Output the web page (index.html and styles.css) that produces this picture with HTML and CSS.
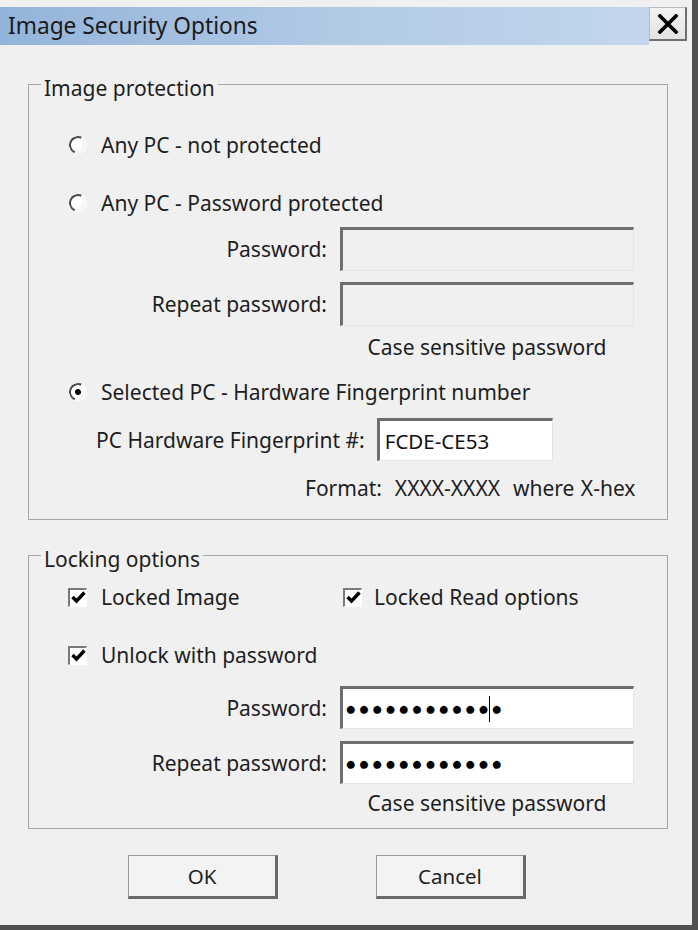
FILE: index.html
```html
<!DOCTYPE html>
<html lang="en">
<head>
<meta charset="utf-8">
<title>Image Security Options</title>
<link rel="stylesheet" href="styles.css">
</head>
<body>
<div class="window">
  <div class="titlebar">
    <div class="title">Image Security Options</div>
    <div class="close">
      <svg width="22" height="20" viewBox="0 0 22 20"><path d="M3 2 L19 18 M19 2 L3 18" stroke="#000" stroke-width="3.6" stroke-linecap="square"/></svg>
    </div>
  </div>

  <fieldset class="group g1">
    <legend>Image protection</legend>
    <div class="opt r1"><span class="radio"></span><span>Any PC - not protected</span></div>
    <div class="opt r2"><span class="radio"></span><span>Any PC - Password protected</span></div>
    <div class="field f1"><span class="lbl">Password:</span><div class="input disabled"></div></div>
    <div class="field f2"><span class="lbl">Repeat password:</span><div class="input disabled"></div></div>
    <div class="field note n1"><span></span><span class="notetext">Case sensitive password</span></div>
    <div class="opt r3"><span class="radio checked"></span><span>Selected PC - Hardware Fingerprint number</span></div>
    <div class="fp-row"><span class="fp-lbl">PC Hardware Fingerprint #:</span><div class="input fp">FCDE-CE53</div></div>
    <div class="format">Format:&nbsp; <span class="xx">XXXX-XXXX</span>&nbsp; where X-hex</div>
  </fieldset>

  <fieldset class="group g2">
    <legend>Locking options</legend>
    <div class="chk-row c1">
      <div class="opt-inline"><span class="check"><svg width="15" height="15" viewBox="0 0 15 15"><path d="M1.5 7 L5.5 11 L13.5 2.5" fill="none" stroke="#000" stroke-width="3.4"/></svg></span><span>Locked Image</span></div>
      <div class="opt-inline second"><span class="check"><svg width="15" height="15" viewBox="0 0 15 15"><path d="M1.5 7 L5.5 11 L13.5 2.5" fill="none" stroke="#000" stroke-width="3.4"/></svg></span><span>Locked Read options</span></div>
    </div>
    <div class="chk-row c2">
      <div class="opt-inline"><span class="check"><svg width="15" height="15" viewBox="0 0 15 15"><path d="M1.5 7 L5.5 11 L13.5 2.5" fill="none" stroke="#000" stroke-width="3.4"/></svg></span><span>Unlock with password</span></div>
    </div>
    <div class="field f3"><span class="lbl">Password:</span><div class="input pw"><span>●●●●●●●●●●●</span><span class="caret"></span><span>●</span></div></div>
    <div class="field f4"><span class="lbl">Repeat password:</span><div class="input pw"><span>●●●●●●●●●●●●</span></div></div>
    <div class="field note n2"><span></span><span class="notetext">Case sensitive password</span></div>
  </fieldset>

  <div class="buttons">
    <div class="btn">OK</div>
    <div class="btn">Cancel</div>
  </div>
</div>
</body>
</html>
```

FILE: styles.css
```css
html, body {
  margin: 0;
  padding: 0;
  background: #f3f3f3;
}
.window {
  width: 698px;
  height: 930px;
  box-sizing: border-box;
  background: #f0f0f0;
  border-right: 6px solid #505050;
  border-bottom: 5px solid #505050;
  padding-top: 7px;
  font-family: "Noto Sans", "Open Sans", sans-serif;
  font-size: 21px;
  color: #1e1e1e;
  display: flex;
  flex-direction: column;
}
.titlebar {
  display: flex;
  align-items: stretch;
  height: 38px;
}
.title {
  flex: 1;
  background: linear-gradient(to right, #93b4da, #b3cbe6 55%, #c3d6ec);
  padding-left: 8px;
  font-size: 22.7px;
  line-height: 38px;
  color: #1a1a1a;
}
.close {
  width: 38px;
  height: 34px;
  box-sizing: border-box;
  margin: 0 5px 0 0;
  background: linear-gradient(#f4f4f4, #e2e2e2);
  border: 1px solid #b8b8b8;
  border-right: 2px solid #6f6f6f;
  border-bottom: 2px solid #6f6f6f;
  display: flex;
  align-items: center;
  justify-content: center;
}
.group {
  margin: 0 0 0 28px;
  padding: 0;
  width: 640px;
  box-sizing: border-box;
  border: 1px solid #a6a6a6;
  min-inline-size: 0;
}
.group legend {
  margin-left: 12px;
  padding: 8px 3px 0 3px;
  line-height: 26px;
}
.g1 { margin-top: 22px; padding-bottom: 19px; }
.g2 { margin-top: 18px; padding-bottom: 13px; }

.opt {
  display: flex;
  align-items: center;
  height: 30px;
  padding-left: 40px;
  gap: 14px;
}
.r1 { margin-top: 29px; }
.r2 { margin-top: 28px; }
.r3 { margin-top: 18px; }

.radio {
  flex: none;
  width: 18px;
  height: 18px;
  box-sizing: border-box;
  border-radius: 50%;
  border: 2.5px solid;
  border-color: #4a4a4a #fbfbfb #fbfbfb #4a4a4a;
  background: radial-gradient(circle at 40% 40%, #ffffff 45%, #e2e2e2);
  display: flex;
  align-items: center;
  justify-content: center;
  transform: rotate(-20deg);
}
.radio.checked::after {
  content: "";
  width: 6px;
  height: 6px;
  border-radius: 50%;
  background: #000;
}

.field {
  display: grid;
  grid-template-columns: 298px 294px;
  column-gap: 13px;
  align-items: center;
}
.lbl { text-align: right; }
.input {
  height: 44px;
  box-sizing: border-box;
  border-top: 3px solid #6e6e6e;
  border-left: 3px solid #6e6e6e;
  border-right: 1px solid #e4e4e4;
  border-bottom: 1px solid #e4e4e4;
  background: #ffffff;
}
.input.disabled { background: #f0f0f0; }
.f1 { margin-top: 9px; }
.f2 { margin-top: 11px; }
.note { height: 24px; }
.notetext { text-align: center; line-height: 24px; white-space: nowrap; }
.n1 { margin-top: 9px; }

.fp-row {
  display: flex;
  align-items: center;
  margin-top: 11px;
  padding-left: 67px;
  gap: 12px;
}
.input.fp {
  flex: none;
  width: 176px;
  height: 43px;
  padding-left: 5px;
  display: flex;
  align-items: center;
  font-size: 20.5px;
  color: #111;
}
.format {
  margin-top: 15px;
  padding-left: 276px;
  line-height: 24px;
  white-space: nowrap;
  word-spacing: 1px;
}

.chk-row {
  display: flex;
  align-items: center;
  height: 30px;
  padding-left: 39px;
}
.c1 { margin-top: 10px; }
.c2 { margin-top: 28px; }
.opt-inline {
  display: flex;
  align-items: center;
  gap: 14px;
  width: 275px;
}
.opt-inline.second { gap: 12px; }
.check {
  flex: none;
  width: 19px;
  height: 19px;
  box-sizing: border-box;
  border-top: 2px solid #7a7a7a;
  border-left: 2px solid #7a7a7a;
  border-right: 1px solid #ffffff;
  border-bottom: 1px solid #ffffff;
  background: #ffffff;
  display: flex;
  align-items: center;
  justify-content: center;
}
.f3 { margin-top: 16px; }
.f4 { margin-top: 12px; }
.f3 .input, .f4 .input { height: 43px; }
.input.pw {
  display: flex;
  align-items: center;
  padding-left: 2px;
  font-family: "Liberation Sans", sans-serif;
  font-size: 18.5px;
  letter-spacing: 2.1px;
  color: #000;
  white-space: nowrap;
}
.caret {
  flex: none;
  width: 1px;
  height: 26px;
  background: #000;
  margin-left: -2px;
  margin-right: 1px;
}
.n2 { margin-top: 7px; }

.buttons {
  display: flex;
  gap: 98px;
  padding-left: 128px;
  margin-top: 26px;
}
.btn {
  width: 150px;
  height: 44px;
  box-sizing: border-box;
  background: #f3f3f3;
  border: 1px solid #9a9a9a;
  border-right: 3px solid #6a6a6a;
  border-bottom: 3px solid #6a6a6a;
  display: flex;
  align-items: center;
  justify-content: center;
  font-size: 20.5px;
}
```
